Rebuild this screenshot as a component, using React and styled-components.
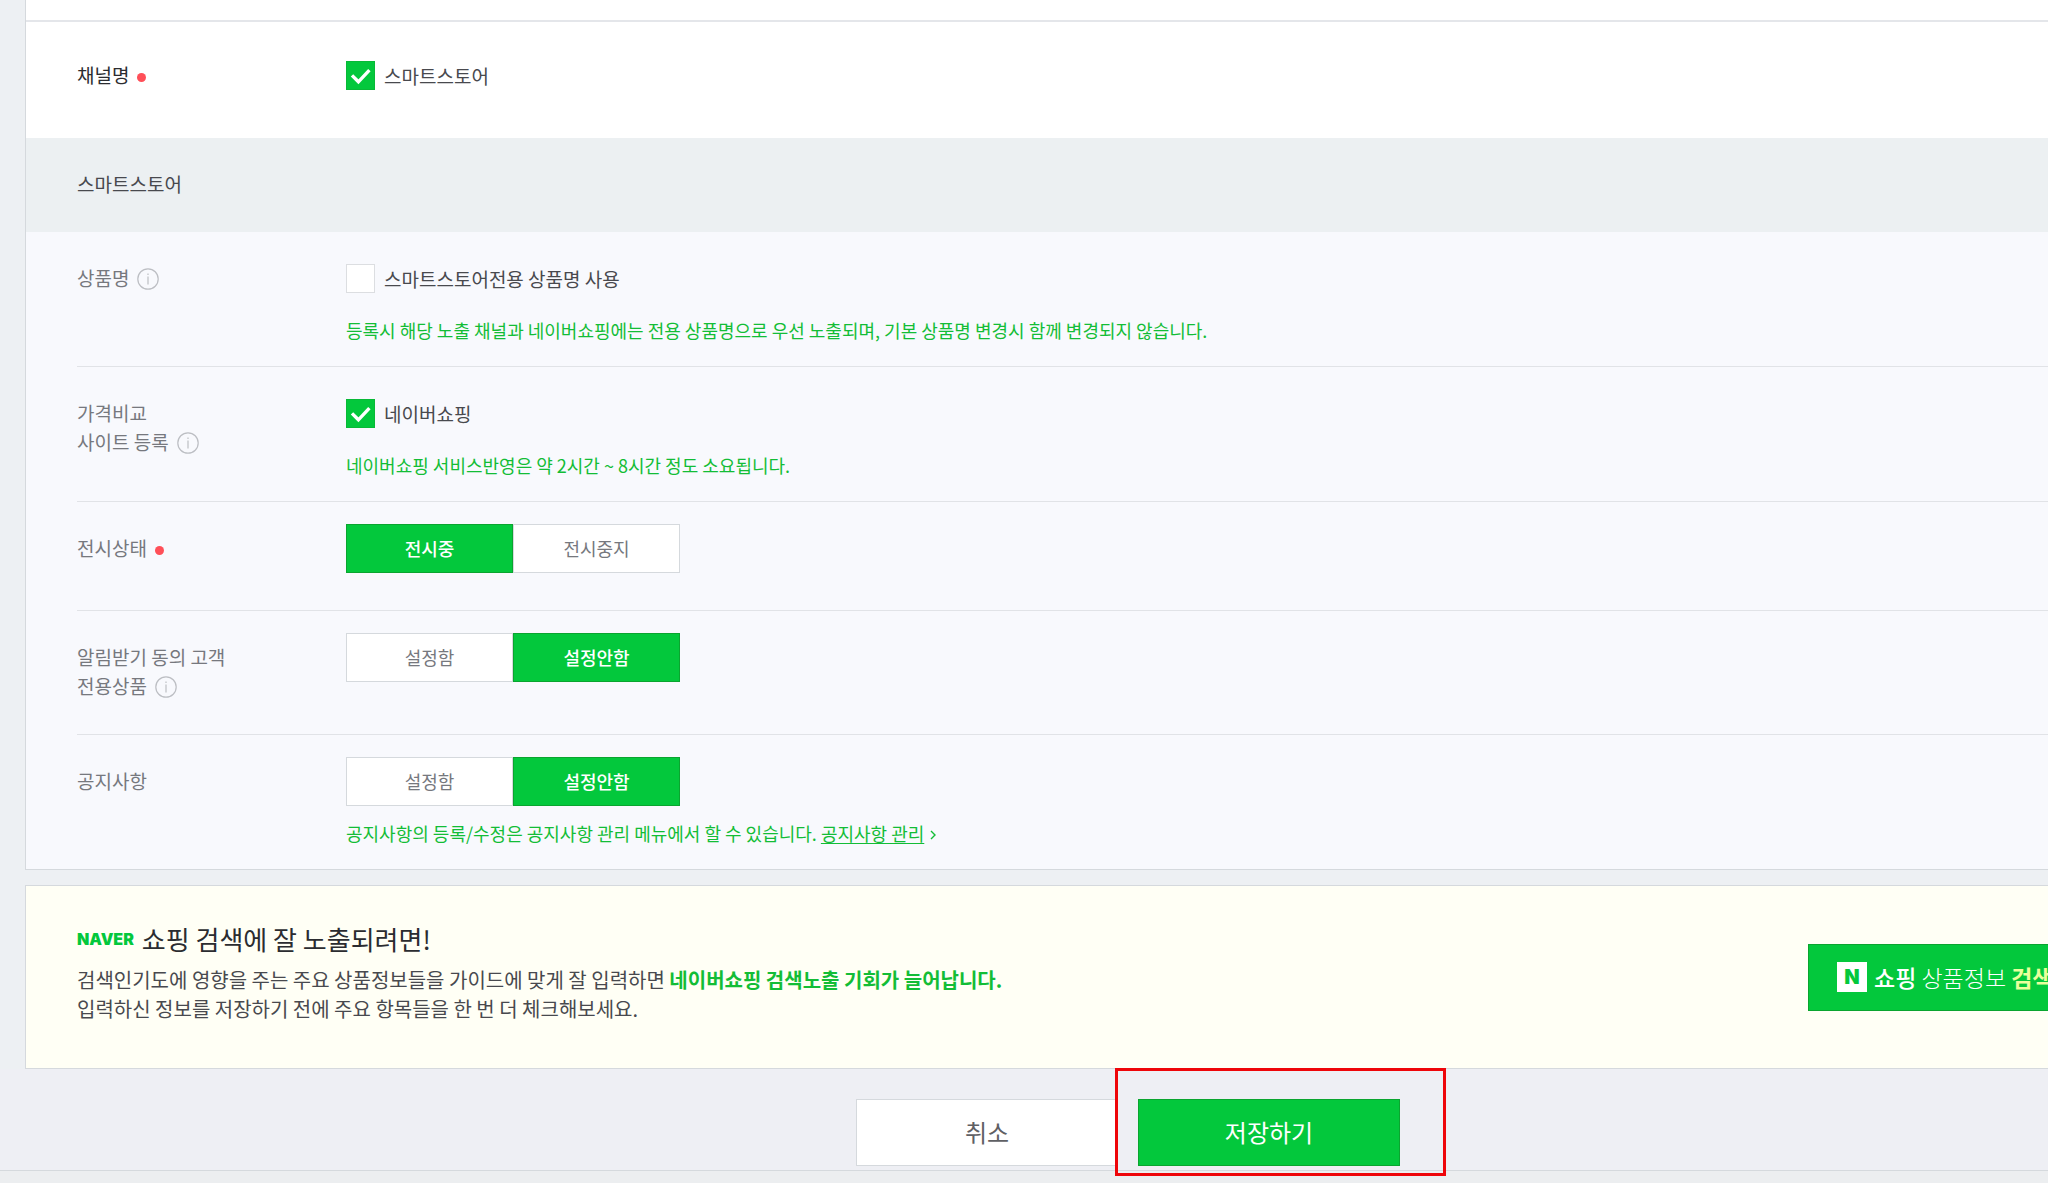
import React, { useState } from "react";
import styled, { createGlobalStyle, css } from "styled-components";

const GlobalStyle = createGlobalStyle`
  :root {
    --green: #03c83c;
    --green-dark: #0aa52f;
    --green-text: #13bd36;
    --line: #e4e6ea;
    --border: #d5d9dd;
    --label: #76787e;
    --text: #48494e;
  }

  * {
    box-sizing: border-box;
  }

  body {
    margin: 0;
    overflow-x: hidden;
    background-color: #edf0f3;
    color: var(--text);
    font-family: "Noto Sans CJK KR", sans-serif;
    font-size: 19px;
    font-weight: 400;
  }

  button {
    font-family: inherit;
  }
`;

function InfoIcon() {
  return (
    <Info viewBox="0 0 22 22" aria-hidden="true">
      <circle cx="11" cy="11" r="10.2" />
      <path d="M11 8.6v8" />
      <path d="M11 5.4v1.6" />
    </Info>
  );
}

function Check({ label, checked }) {
  const [on, setOn] = useState(checked);

  return (
    <CheckLabel>
      <CheckInput type="checkbox" checked={on} onChange={() => setOn(!on)} />
      <CheckBox $on={on}>
        {on && (
          <svg viewBox="0 0 27 27" aria-hidden="true">
            <path d="M5 13.4l6.4 6.4L22.4 8.2" />
          </svg>
        )}
      </CheckBox>
      {label}
    </CheckLabel>
  );
}

function Toggle({ options, selected }) {
  const [current, setCurrent] = useState(selected);

  return (
    <ToggleGroup>
      {options.map((option, index) => (
        <ToggleButton
          key={option}
          type="button"
          aria-pressed={current === index}
          $active={current === index}
          onClick={() => setCurrent(index)}
        >
          {option}
        </ToggleButton>
      ))}
    </ToggleGroup>
  );
}

function App() {
  return (
    <>
      <GlobalStyle />
      <Page>
        <Content>
          <Panel>
            <PanelTop />
            <ChannelRow>
              <RowLabel $strong>
                채널명
                <Required />
              </RowLabel>
              <Control>
                <Check label="스마트스토어" checked />
              </Control>
            </ChannelRow>
            <SectionTitle>스마트스토어</SectionTitle>
            <Section>
              <Row>
                <RowLabel>
                  상품명
                  <InfoIcon />
                </RowLabel>
                <div>
                  <Control>
                    <Check label="스마트스토어전용 상품명 사용" checked={false} />
                  </Control>
                  <Hint>
                    등록시 해당 노출 채널과 네이버쇼핑에는 전용 상품명으로 우선 노출되며, 기본 상품명 변경시 함께 변경되지 않습니다.
                  </Hint>
                </div>
              </Row>
              <Row>
                <RowLabel>
                  가격비교
                  <br />
                  사이트 등록
                  <InfoIcon />
                </RowLabel>
                <div>
                  <Control>
                    <Check label="네이버쇼핑" checked />
                  </Control>
                  <Hint>네이버쇼핑 서비스반영은 약 2시간 ~ 8시간 정도 소요됩니다.</Hint>
                </div>
              </Row>
              <Row $bottom="37px">
                <RowLabel>
                  전시상태
                  <Required />
                </RowLabel>
                <Toggle options={["전시중", "전시중지"]} selected={0} />
              </Row>
              <Row $bottom="34px">
                <RowLabel>
                  알림받기 동의 고객
                  <br />
                  전용상품
                  <InfoIcon />
                </RowLabel>
                <Toggle options={["설정함", "설정안함"]} selected={1} />
              </Row>
              <Row>
                <RowLabel>공지사항</RowLabel>
                <div>
                  <Toggle options={["설정함", "설정안함"]} selected={1} />
                  <Hint>
                    공지사항의 등록/수정은 공지사항 관리 메뉴에서 할 수 있습니다.{" "}
                    <HintLink href="#notice">공지사항 관리</HintLink>
                    <Chevron viewBox="0 0 6 10" aria-hidden="true">
                      <path d="M1 1l4 4-4 4" />
                    </Chevron>
                  </Hint>
                </div>
              </Row>
            </Section>
          </Panel>

          <Banner>
            <BannerBody>
              <BannerTitle>
                <NaverLogo>NAVER</NaverLogo>
                쇼핑 검색에 잘 노출되려면!
              </BannerTitle>
              <BannerText>
                검색인기도에 영향을 주는 주요 상품정보들을 가이드에 맞게 잘 입력하면{" "}
                <strong>네이버쇼핑 검색노출 기회가 늘어납니다.</strong>
                <br />
                입력하신 정보를 저장하기 전에 주요 항목들을 한 번 더 체크해보세요.
              </BannerText>
            </BannerBody>
            <GuideButton type="button">
              <GuideMark>N</GuideMark>
              <span>
                <b>쇼핑</b> 상품정보 <em>검색</em>
              </span>
            </GuideButton>
          </Banner>
        </Content>
        <Actions>
          <ActionButton type="button">취소</ActionButton>
          <Highlight>
            <ActionButton type="button" $primary>
              저장하기
            </ActionButton>
          </Highlight>
        </Actions>
        <Footer />
      </Page>
    </>
  );
}

/* The form is wider than the window, its right part is cut off */
const Page = styled.main`
  width: calc(100% + 208px);
`;

const Content = styled.div`
  padding: 0 25px;
`;

const Panel = styled.section`
  border: 1px solid var(--border);
  border-top: 0;
  background-color: #ffffff;
`;

const PanelTop = styled.div`
  height: 22px;
  border-bottom: 2px solid var(--line);
`;

const Row = styled.div`
  display: grid;
  grid-template-columns: 269px 1fr;
  padding: 22px 0 ${(props) => props.$bottom || "22px"};

  & + & {
    border-top: 1px solid #e1e3e7;
  }
`;

const ChannelRow = styled(Row)`
  padding: 29px 51px 38px;
`;

const SectionTitle = styled.h2`
  margin: 0;
  padding: 31px 51px 34px;
  background-color: #ecf0f2;
  font-size: 19px;
  font-weight: 400;
  line-height: 29px;
`;

const Section = styled.div`
  padding-left: 51px;
  background-color: #f8f9fd;
`;

const RowLabel = styled.div`
  padding-top: 9px;
  color: ${(props) => (props.$strong ? "#2b2c30" : "var(--label)")};
  line-height: 29px;
`;

const Required = styled.span`
  display: inline-block;
  width: 9px;
  height: 9px;
  margin-left: 8px;
  border-radius: 50%;
  background-color: #ff4f58;
  vertical-align: 1px;
`;

const Info = styled.svg`
  width: 22px;
  height: 22px;
  margin-left: 8px;
  vertical-align: -4px;
  fill: none;
  stroke: #bcbec3;
  stroke-width: 1.2;
`;

const Control = styled.div`
  display: flex;
  align-items: center;
  min-height: 49px;
`;

const CheckLabel = styled.label`
  position: relative;
  display: inline-flex;
  align-items: center;
  gap: 9px;
  line-height: 29px;
  cursor: pointer;
`;

const CheckInput = styled.input`
  position: absolute;
  width: 29px;
  height: 29px;
  margin: 0;
  opacity: 0;
`;

const CheckBox = styled.span`
  width: 29px;
  height: 29px;
  border: 1px solid ${(props) => (props.$on ? "#08b937" : "#dcdee1")};
  background-color: ${(props) => (props.$on ? "var(--green)" : "#ffffff")};

  svg {
    display: block;
    fill: none;
    stroke: #ffffff;
    stroke-width: 3.4;
  }
`;

const Hint = styled.p`
  margin: 14px 0 0;
  color: var(--green-text);
  font-size: 18px;
  line-height: 27px;
`;

const HintLink = styled.a`
  color: inherit;
  text-decoration: underline;
  text-underline-offset: 2px;
`;

const Chevron = styled.svg`
  width: 6px;
  height: 10px;
  margin-left: 6px;
  vertical-align: 1px;
  fill: none;
  stroke: var(--green-text);
  stroke-width: 1.4;
`;

const ToggleGroup = styled.div`
  display: flex;
`;

const ToggleButton = styled.button`
  width: 167px;
  height: 49px;
  padding: 0 0 2px;
  border: 1px solid var(--border);
  background-color: #ffffff;
  color: var(--label);
  font-size: 18px;
  cursor: pointer;

  ${(props) =>
    props.$active &&
    css`
      border-color: var(--green-dark);
      background-color: var(--green);
      color: #ffffff;
      font-weight: 500;
    `}
`;

const Banner = styled.section`
  display: flex;
  align-items: center;
  justify-content: space-between;
  margin-top: 15px;
  padding: 0 52px 0 51px;
  border: 1px solid var(--border);
  background-color: #fffff5;
`;

const BannerBody = styled.div`
  padding: 33px 0 45px;
`;

const BannerTitle = styled.h3`
  display: flex;
  align-items: center;
  gap: 8px;
  margin: 0;
  color: #2b2c30;
  font-size: 26px;
  font-weight: 400;
  line-height: 40px;
`;

const NaverLogo = styled.span`
  color: var(--green);
  font-family: Inter, sans-serif;
  font-size: 16px;
  font-weight: 900;
`;

const BannerText = styled.p`
  margin: 6px 0 0;
  font-size: 20px;
  line-height: 29px;

  strong {
    color: var(--green-text);
    font-weight: 700;
  }
`;

const GuideButton = styled.button`
  display: flex;
  flex: 0 0 370px;
  align-items: center;
  gap: 7px;
  height: 67px;
  padding: 0 28px;
  border: 1px solid var(--green-dark);
  background-color: var(--green);
  color: #ffffff;
  font-size: 23px;
  font-weight: 300;
  white-space: nowrap;
  cursor: pointer;

  b {
    font-weight: 500;
  }

  em {
    color: #e9ff9c;
    font-style: normal;
    font-weight: 700;
  }
`;

const GuideMark = styled.span`
  width: 30px;
  height: 30px;
  background-color: #ffffff;
  color: var(--green);
  font-family: Inter, sans-serif;
  font-size: 20px;
  font-weight: 900;
  line-height: 30px;
  text-align: center;
`;

const Actions = styled.div`
  display: flex;
  justify-content: center;
  gap: 20px;
  padding: 30px 0 4px;
  background-color: #eeeff4;
`;

const ActionButton = styled.button`
  width: 262px;
  height: 67px;
  padding: 0 0 2px;
  border: 1px solid ${(props) => (props.$primary ? "var(--green-dark)" : "var(--border)")};
  background-color: ${(props) => (props.$primary ? "var(--green)" : "#ffffff")};
  color: ${(props) => (props.$primary ? "#ffffff" : "#5f6064")};
  font-size: 24px;
  cursor: pointer;
`;

const Highlight = styled.div`
  position: relative;

  &::after {
    content: "";
    position: absolute;
    top: -31px;
    right: -46px;
    bottom: -10px;
    left: -23px;
    border: 3px solid #ee0509;
    pointer-events: none;
  }
`;

const Footer = styled.footer`
  height: 13px;
  border-top: 1px solid var(--border);
  background-color: #eceef0;
`;

export default App;
